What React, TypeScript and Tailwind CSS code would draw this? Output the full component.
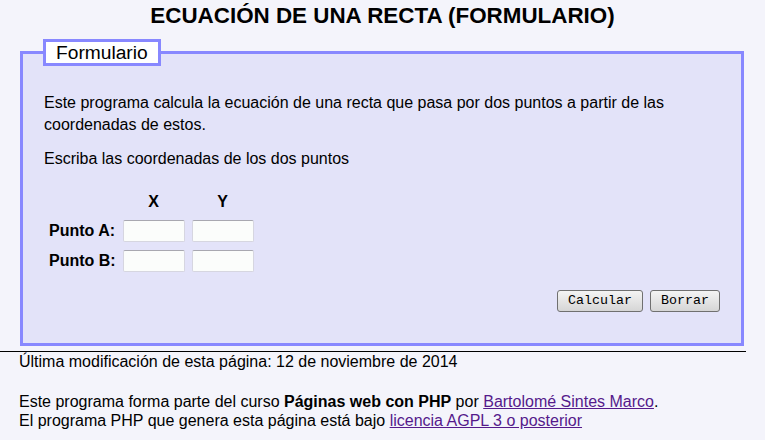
import React from "react";

const points = ["Punto A:", "Punto B:"];

const App = () => {
  return (
    <div className="min-h-[440px] w-[765px] overflow-hidden bg-[#f4f4fb] text-black font-['Liberation_Sans',Arial,sans-serif]">
      <h1 className="mt-[3px] text-center text-[22.4px] font-bold leading-[26px]">
        ECUACIÓN DE UNA RECTA (FORMULARIO)
      </h1>

      <fieldset className="mt-[10px] ml-[20px] mr-[21px] border-[3px] border-[#8888ff] bg-[#e3e3f9] px-[21px] pb-[31px]">
        <legend className="-ml-[1px] border-[3px] border-[#8888ff] bg-white px-[10px] text-[19.2px] leading-[21px]">
          Formulario
        </legend>

        <p className="mt-[26px] text-[16px] leading-[22px]">
          Este programa calcula la ecuación de una recta que pasa por dos puntos a partir de las
          coordenadas de estos.
        </p>
        <p className="mt-[12px] text-[16px] leading-[22px]">
          Escriba las coordenadas de los dos puntos
        </p>

        <div className="mt-[18px] ml-[5px] grid w-fit grid-cols-[auto_62px_62px] gap-x-[7px] text-[16px] font-bold">
          <div className="h-[28px]" />
          <div className="flex h-[28px] items-center justify-center">X</div>
          <div className="flex h-[28px] items-center justify-center">Y</div>
          {points.map((label) => (
            <React.Fragment key={label}>
              <div className="flex h-[30px] items-center">{label}</div>
              <div className="flex h-[30px] items-center">
                <input
                  type="text"
                  className="h-[22px] w-[62px] rounded-[2px] border border-[#d6d6e0] border-t-[#a8a8b0] bg-[#fbfdfb] outline-none"
                />
              </div>
              <div className="flex h-[30px] items-center">
                <input
                  type="text"
                  className="h-[22px] w-[62px] rounded-[2px] border border-[#d6d6e0] border-t-[#a8a8b0] bg-[#fbfdfb] outline-none"
                />
              </div>
            </React.Fragment>
          ))}
        </div>

        <div className="mt-[14px] flex justify-end gap-[7px]">
          <button className="h-[22px] rounded-[3px] border border-[#707070] bg-gradient-to-b from-[#f4f4f4] to-[#d6d6d6] px-[10px] font-['Liberation_Mono','Courier_New',monospace] text-[13.33px] leading-[20px]">
            Calcular
          </button>
          <button className="h-[22px] rounded-[3px] border border-[#707070] bg-gradient-to-b from-[#f4f4f4] to-[#d6d6d6] px-[10px] font-['Liberation_Mono','Courier_New',monospace] text-[13.33px] leading-[20px]">
            Borrar
          </button>
        </div>
      </fieldset>

      <div className="mt-[5px] w-[746px] border-t border-black" />

      <div className="px-[19px] text-[16px] leading-[19px]">
        <p>Última modificación de esta página: 12 de noviembre de 2014</p>
        <p className="mt-[21px]">
          Este programa forma parte del curso <b>Páginas web con PHP</b> por{" "}
          <a href="#" className="text-[#551a8b] underline">
            Bartolomé Sintes Marco
          </a>
          .
        </p>
        <p>
          El programa PHP que genera esta página está bajo{" "}
          <a href="#" className="text-[#551a8b] underline">
            licencia AGPL 3 o posterior
          </a>
        </p>
      </div>
    </div>
  );
};

export default App;
